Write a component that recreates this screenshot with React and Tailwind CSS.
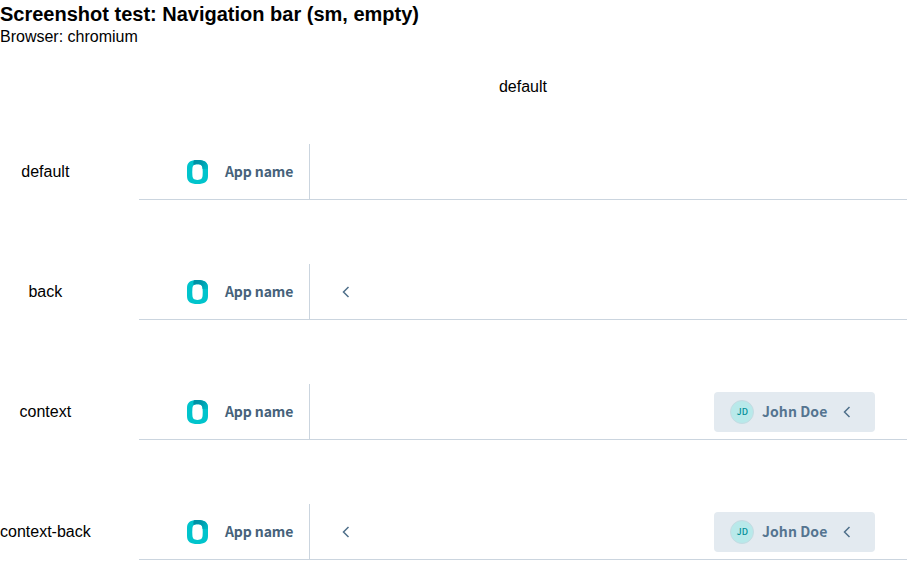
const rows = [
  { label: "default", back: false, context: false },
  { label: "back", back: true, context: false },
  { label: "context", back: false, context: true },
  { label: "context-back", back: true, context: true },
];

function Logo() {
  return (
    <svg width="21" height="24" viewBox="0 0 21 24" className="block shrink-0">
      <defs>
        <linearGradient id="logo-shade" x1="6" y1="0" x2="21" y2="8" gradientUnits="userSpaceOnUse">
          <stop offset="0" stopColor="#008fa3" />
          <stop offset="0.500" stopColor="#0097aa" />
          <stop offset="1" stopColor="#00bcc6" />
        </linearGradient>
      </defs>
      <path
        fillRule="evenodd"
        fill="#00c4cc"
        d="M10.500 0C17.500 0 21 2.300 21 8v8c0 5.700-3.500 8-10.500 8S0 21.700 0 16V8C0 2.300 3.500 0 10.500 0ZM10.500 4.300C6.800 4.300 5.600 5.500 5.400 9c-.2 2-.2 4 0 6.300.2 3.300 1.400 4.600 5.100 4.600s4.900-1.300 5.100-4.600c.2-2.300.2-4.300 0-6.300-.2-3.500-1.400-4.700-5.100-4.700Z"
      />
      <path
        fill="url(#logo-shade)"
        d="M7 .2C8 .1 9.200 0 10.500 0 17.500 0 21 2.300 21 8v1h-5.400c-.2-3.500-1.400-4.700-5.100-4.700-1.800 0-3 .3-3.800 1C6.200 3.400 6.300 1.500 7 .2Z"
      />
    </svg>
  );
}

function Chevron() {
  return (
    <svg width="20" height="20" viewBox="0 0 20 20" fill="none" stroke="#4f6f8a" strokeWidth="1.500" className="block shrink-0">
      <path d="M12.500 5 7.500 10l5 5" />
    </svg>
  );
}

function NavigationBar({ back, context }) {
  return (
    <div className="flex h-14 w-[768px] items-stretch border-b border-[#cbd5df] pl-12 pr-8 font-['Noto_Sans_CJK_SC','Open_Sans',sans-serif] text-sm font-bold text-[#46627a]">
      <div className="flex w-[123px] shrink-0 items-center border-r border-[#cbd5df]">
        <Logo />
        <span className="ml-[17px] pb-0.5 leading-5 tracking-[-0.100px] whitespace-nowrap">App name</span>
      </div>
      <div className="flex grow items-center pl-[26px]">{back && <Chevron />}</div>
      {context && (
        <div className="my-2 flex h-10 w-[161px] items-center rounded bg-[#e3eaf0] pl-4 text-[#557590]">
          <span className="flex size-6 shrink-0 items-center justify-center rounded-full border border-[#c5dbe2] bg-[#b8e9ea] pb-px pl-px text-[9px] leading-none font-medium text-[#009099]">
            JD
          </span>
          <span className="ml-2 w-[75px] pb-0.5 leading-5 tracking-[0.080px] whitespace-nowrap">John Doe</span>
          <Chevron />
        </div>
      )}
    </div>
  );
}

export default function App() {
  return (
    <div className="h-[576px] w-[923px] overflow-hidden bg-white font-['Liberation_Sans',Arial,sans-serif] text-base text-black">
      <h1 className="h-7 text-xl leading-7 font-bold">Screenshot test: Navigation bar (sm, empty)</h1>
      <p className="h-[34px] leading-[18px]">Browser: chromium</p>
      <div className="grid grid-cols-[139px_768px]">
        <div />
        <div className="h-[50px] text-center leading-[50px]">default</div>
      </div>
      {rows.map((row) => (
        <div key={row.label} className="grid h-[120px] grid-cols-[90.700px_768px] items-center gap-x-[48.300px]">
          <div className="text-center whitespace-nowrap">{row.label}</div>
          <NavigationBar back={row.back} context={row.context} />
        </div>
      ))}
    </div>
  );
}
